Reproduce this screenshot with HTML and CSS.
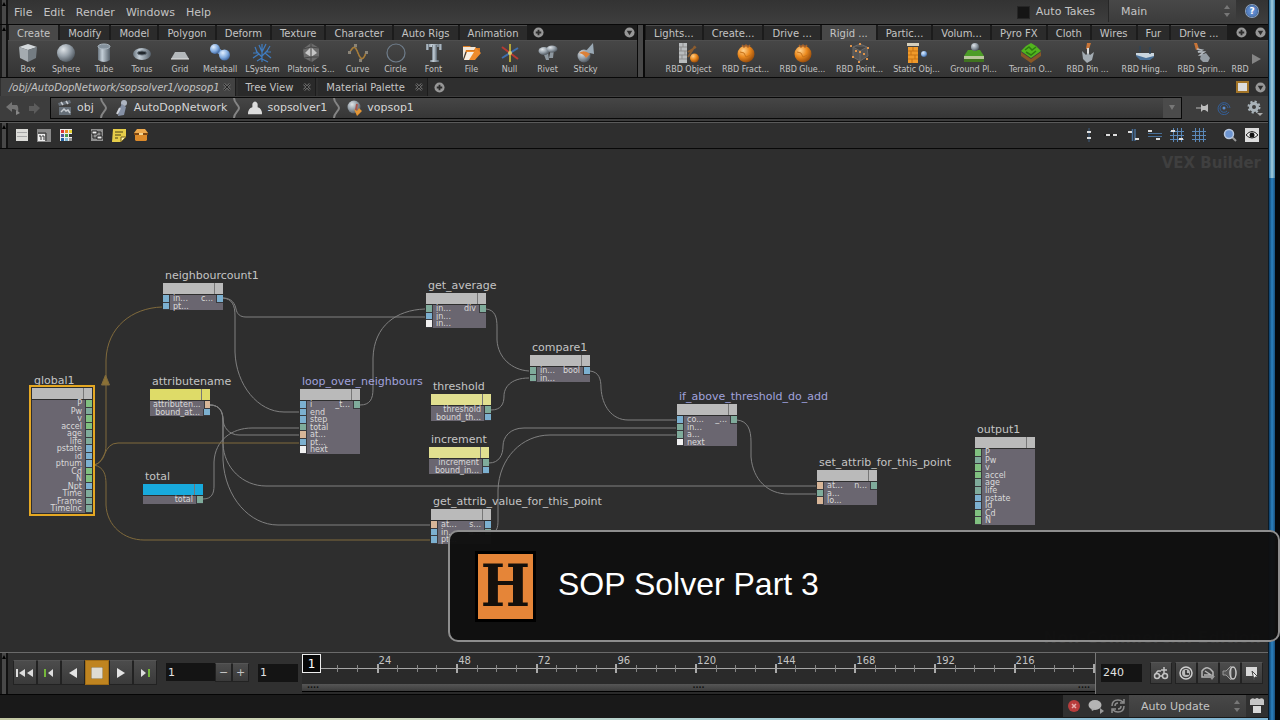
FILE: index.html
```html
<!DOCTYPE html>
<html lang="en">
<head>
    <meta charset="UTF-8">
    <meta name="viewport" content="width=device-width, initial-scale=1.0">
    <title>SOP Solver Part 3</title>
    <link rel="stylesheet" href="styles.css">
</head>
<body>
    <svg class="defs" width="0" height="0" aria-hidden="true">
        <defs>
            <radialGradient id="gBall" cx="35%" cy="30%" r="75%"><stop offset="0" stop-color="#dfe4e8"/><stop offset="0.5" stop-color="#98a2ab"/><stop offset="1" stop-color="#4c545c"/></radialGradient>
            <radialGradient id="gBlue" cx="35%" cy="30%" r="75%"><stop offset="0" stop-color="#e2efff"/><stop offset="0.6" stop-color="#7fa9de"/><stop offset="1" stop-color="#3d629a"/></radialGradient>
            <radialGradient id="gOrange" cx="35%" cy="30%" r="75%"><stop offset="0" stop-color="#ffd08a"/><stop offset="0.5" stop-color="#ec8a1e"/><stop offset="1" stop-color="#92480a"/></radialGradient>
            <linearGradient id="gTube"><stop offset="0" stop-color="#69747e"/><stop offset="0.35" stop-color="#c4cfd8"/><stop offset="1" stop-color="#56616b"/></linearGradient>
        </defs>
        <symbol id="box" viewBox="0 0 20 20"><path d="M1 4 10 1 19 4 10 7z" fill="#d3d8db"/><path d="M1 4 10 7 10 19 2 15z" fill="#a4abb0"/><path d="M19 4 10 7 10 19 18 15z" fill="#747c82"/></symbol>
        <symbol id="sphere" viewBox="0 0 20 20"><circle cx="10" cy="10" r="9" fill="url(#gBall)"/></symbol>
        <symbol id="tube" viewBox="0 0 20 20"><path d="M4 3v14q6 4 12 0V3z" fill="url(#gTube)"/><ellipse cx="10" cy="3.500" rx="6" ry="2.500" fill="#84919c" stroke="#aab6c0"/></symbol>
        <symbol id="torus" viewBox="0 0 20 20"><ellipse cx="10" cy="11" rx="9" ry="6" fill="url(#gTube)"/><ellipse cx="10" cy="10" rx="4.500" ry="2" fill="#22282d" stroke="#66717a"/></symbol>
        <symbol id="grid" viewBox="0 0 20 20"><path d="M5 9h10l4 7H1z" fill="#b4b8bb"/><path d="M1 16h18" stroke="#e0e0e0"/></symbol>
        <symbol id="metaball" viewBox="0 0 20 20"><path d="M6 6 14 12" stroke="#6f9bd2" stroke-width="5"/><circle cx="5" cy="6" r="5" fill="url(#gBlue)"/><circle cx="14.500" cy="12" r="5.500" fill="url(#gBlue)"/></symbol>
        <symbol id="lsystem" viewBox="0 0 20 20"><path d="M10 19V9M10 14 4 8M10 13l6-6M10 9 7 2M10 9l4-8M6 10H1M7 11l-6 4M14 9h5M13 10l6 5M5 9 3 4M15 8l3-5M10 15l-5 3M10 16l6 3M10 10 10 1" fill="none" stroke="#3f7cc0" stroke-width="1.200"/></symbol>
        <symbol id="platonic" viewBox="0 0 20 20"><path d="M10 0 18 5 18 14 11 19 3 15 2 6z" fill="#6b6b6b"/><path d="M10 4 16 10 10 14 4 10z" fill="#c5c5c5"/><path d="M10 0v19M2 6l8-2 8 1M3 15l7-1 8 0" stroke="#454545" fill="none"/></symbol>
        <symbol id="curve" viewBox="0 0 20 20"><path d="M1 10 7 2 13 18 19 10" stroke="#776" fill="none" stroke-dasharray="2 1"/><path d="M2 9C6 1 8 5 10 10s5 10 8-1" fill="none" stroke="#a87c37" stroke-width="1.500"/><path d="M0 8h3v3H0zM6 1h3v3H6zM11 16h3v3h-3zM17 8h3v3h-3z" fill="#8a8478"/></symbol>
        <symbol id="circle" viewBox="0 0 20 20"><circle cx="10" cy="10" r="9" fill="none" stroke="#6f7d8b" stroke-width="1.200"/></symbol>
        <symbol id="font" viewBox="0 0 20 20"><g fill="url(#gTube)"><rect x="2" y="1" width="16" height="3"/><rect x="2" y="1" width="3" height="6"/><rect x="15" y="1" width="3" height="6"/><rect x="8" y="2" width="5" height="17"/><rect x="6" y="17" width="9" height="2"/></g></symbol>
        <symbol id="file" viewBox="0 0 20 20"><path d="M1 3h7l2 2h8v4H1z" fill="#d8781f"/><path d="M1 4h13l-2 3H4L1 16z" fill="#f0e6d8"/><path d="M2 17 5 8h8v-4l6 6-6 7z" fill="#ee8b2c"/><path d="M2 17 5 9h7l-5 8z" fill="#f7efe4"/></symbol>
        <symbol id="null" viewBox="0 0 20 20"><path d="M10 1v18" stroke="#b4a436" stroke-width="2"/><path d="M2 4l16 12" stroke="#b83a32" stroke-width="2"/><path d="M18 5 2 15" stroke="#3f6fae" stroke-width="2"/><circle cx="10" cy="10" r="2" fill="#d8cc74"/></symbol>
        <symbol id="rivet" viewBox="0 0 20 20"><path d="M5 9l3 8h3L10 9zM13 6l-2 9h4l1-9z" fill="#8d979f"/><ellipse cx="6" cy="8" rx="5.500" ry="4" fill="url(#gBall)"/><ellipse cx="14" cy="6" rx="5.500" ry="3.500" fill="url(#gBall)"/></symbol>
        <symbol id="sticky" viewBox="0 0 20 20"><circle cx="8" cy="13" r="6.500" fill="url(#gBall)"/><path d="M17 0 18 11 9 9z" fill="#9aa9b5"/><path d="M3 10q5-4 11 1l-4 4q-2-4-7-5z" fill="#dc8139"/></symbol>
        <symbol id="rbdobj" viewBox="0 0 20 20"><path d="M0 0h8v20H0z" fill="#b9bcbe"/><path d="M0 4h8M0 8h8M0 12h8M0 16h8M4 0v4M2 4v4M6 8v4M3 12v4" stroke="#8d8d8d"/><path d="M9 14 16 3M9 9l8-5" stroke="#8c5c2e" stroke-width="2"/><circle cx="15.500" cy="15" r="4.500" fill="url(#gOrange)"/></symbol>
        <symbol id="orange" viewBox="0 0 20 20"><circle cx="10" cy="11" r="8.500" fill="url(#gOrange)"/><path d="M6 2l2 2 2-2 2 2 2-2" stroke="#a4602a" fill="none" stroke-width="1.500"/><path d="M4 9l4 1 2 4 5-2" stroke="#c9741a" fill="none"/></symbol>
        <symbol id="points" viewBox="0 0 20 20"><path d="M3 4 10 1 17 4 18 13 10 18 3 14zM3 4l7 4 7-4M10 8v10" fill="#555" stroke="#686868"/><path d="M0 2h2v2H0zM9 0h2v2H9zM17 4h2v2h-2zM9 8h2v2H9zM2 13h2v2H2zM16 15h2v2h-2zM8 18h2v2H8zM5 7h2v2H5zM13 10h2v2h-2z" fill="#e0944a"/></symbol>
        <symbol id="static" viewBox="0 0 20 20"><path d="M0 0h12v3H0z" fill="#d5cfbd"/><path d="M1 4h10v16H1z" fill="#f09a2a"/><path d="M1 8h10M1 12h10M1 16h10M6 4v4M4 8v4M8 12v4M5 16v4" stroke="#c87212"/><circle cx="17" cy="11" r="3" fill="url(#gBlue)"/></symbol>
        <symbol id="ground" viewBox="0 0 20 20"><path d="M4 7h12l4 6H0z" fill="#4c9c27"/><path d="M0 13h20v3H0z" fill="#b9c69c"/><path d="M0 16h20v3H0z" fill="#3f7220"/><circle cx="11" cy="4" r="4" fill="url(#gBall)"/></symbol>
        <symbol id="terrain" viewBox="0 0 20 20"><path d="M0 9 10 16 20 9v4L10 20 0 13z" fill="#875726"/><path d="M0 8 5 3l5-3 5 3 5 5-10 7z" fill="#52b51e"/><path d="M4 7l4-3 3 3 4-3M5 9l5 3 5-4" stroke="#2d7a12" fill="none" stroke-width="1.500"/></symbol>
        <symbol id="pin" viewBox="0 0 20 20"><path d="M9 0h4l-2 6H8z" fill="#c87437"/><path d="M10 5v6" stroke="#ddd" stroke-width="2"/><path d="M4 8l4 4 2-2 2 2 4-3-2 8-5 3-4-4z" fill="#a2abb2"/></symbol>
        <symbol id="hinge" viewBox="0 0 20 20"><path d="M1 10h18v4l-4 3H5l-4-4z" fill="#4a7199"/><path d="M1 10h18v3l-8 2-10-3z" fill="#c9d5de"/><path d="M5 3v6M15 4v7" stroke="#30455a" stroke-width="1.500"/></symbol>
        <symbol id="spring" viewBox="0 0 20 20"><path d="M2 0h3l2 6-3 1z" fill="#c87437"/><path d="M5 6l5 1-4 2 6 0-4 3 5 0" stroke="#b4bac0" fill="none" stroke-width="1.500"/><path d="M9 12l5-2 4 5-2 4-5 0-3-3z" fill="#959da4"/></symbol>
        <symbol id="plus" viewBox="0 0 12 12"><circle cx="6" cy="6" r="5.500" fill="#989898"/><path d="M6 3v6M3 6h6" stroke="#2c2c2c" stroke-width="2"/></symbol>
        <symbol id="down" viewBox="0 0 12 12"><circle cx="6" cy="6" r="5.500" fill="#989898"/><path d="M3 4h6L6 9z" fill="#2c2c2c"/></symbol>
        <symbol id="close" viewBox="0 0 8 8"><path d="M1 1l6 6M7 1 1 7" stroke="#686868" stroke-width="2.500"/><path d="M1 1l6 6M7 1 1 7" stroke="#252525"/></symbol>
        <symbol id="chevron" viewBox="0 0 8 20"><path d="M1 0C1 5 6 7 6 10S1 15 1 20" fill="none" stroke="#858585" stroke-width="2"/></symbol>
        <symbol id="back" viewBox="0 0 14 14"><path d="M0 6l6-5v3h5q2 2 1 8-1-4-6-4v3z" fill="#747474"/><path d="M10 9l4 3-4 2z" fill="#888"/></symbol>
        <symbol id="forward" viewBox="0 0 14 14"><path d="M13 7 7 2v3H2v5h5v3z" fill="#5c5c5c"/></symbol>
        <symbol id="scene" viewBox="0 0 16 16"><path d="M1 3l12-3 1 3-12 3zM2 7h12v8H2z" fill="#666f78"/><path d="M4 2l2 3M9 1l2 3M4 12l3-3 2 2 2-1 2 3" stroke="#c6cbd0" stroke-width="1.500" fill="none"/></symbol>
        <symbol id="dop" viewBox="0 0 16 16"><circle cx="10" cy="3" r="3" fill="#aeb5c2"/><path d="M8 4l4 3-2 8-6 1 1-7z" fill="#8590a5"/><path d="M6 8l-3 6" stroke="#ced2da" stroke-width="2"/></symbol>
        <symbol id="sop" viewBox="0 0 16 16"><path d="M5 3q3-5 6 0v4q5 1 5 8H0q0-7 5-8z" fill="#dcdcdc"/></symbol>
        <symbol id="vop" viewBox="0 0 16 16"><circle cx="7" cy="7" r="6.500" fill="url(#gBall)"/><path d="M7 9l3 2 2-3 3 3-5 5z" fill="#e39535"/><path d="M10 4l-1 6" stroke="#a8534a" stroke-width="2"/></symbol>
        <symbol id="pushpin" viewBox="0 0 16 12"><path d="M2 6h5" stroke="#bbb"/><path d="M7 2l2 2h2l3-2v8l-3-2H9l-2 2z" fill="#bdbdbd"/></symbol>
        <symbol id="target" viewBox="0 0 14 14"><path d="M12 11A6 6 0 1 1 13 7M10 10A4 4 0 1 1 11 7" fill="none" stroke="#345f98"/><circle cx="7" cy="7" r="1.500" fill="#5c8dcd"/></symbol>
        <symbol id="gear" viewBox="0 0 16 16"><circle cx="7" cy="7" r="3.500" fill="none" stroke="#a9b3b9" stroke-width="3"/><circle cx="7" cy="7" r="5.500" fill="none" stroke="#a9b3b9" stroke-width="2" stroke-dasharray="2.200 2.100"/><path d="M10 13h6l-3 3z" fill="#aaa"/></symbol>
        <symbol id="list" viewBox="0 0 14 14"><path d="M1 1h12v12H1z" fill="#dcdcd8"/><path d="M2 4.500h10M2 8.500h10" stroke="#a5a5a5"/></symbol>
        <symbol id="layers" viewBox="0 0 14 14"><path d="M0 1h14v13H0z" fill="#898989"/><path d="M1 6h7v7H1z" fill="#eee"/><path d="M2 8h2v4M5 8h2v4" stroke="#333" fill="none"/><path d="M9 5v8M1 5h8" stroke="#333"/></symbol>
        <symbol id="palette" viewBox="0 0 14 14"><path d="M1 1h12v12H1z" fill="#eee"/><path d="M2 2h3v3H2z" fill="#d33"/><path d="M6 2h3v3H6z" fill="#e98a1f"/><path d="M10 2h3v3h-3z" fill="#e6d233"/><path d="M2 6h3v3H2z" fill="#53549b"/><path d="M6 6h3v3H6z" fill="#4b9b47"/><path d="M10 6h3v3h-3z" fill="#333"/><path d="M2 10h3v3H2z" fill="#25609f"/><path d="M6 10h3v3H6z" fill="#80b8d3"/><path d="M10 10h3v3h-3z" fill="#999"/></symbol>
        <symbol id="flow" viewBox="0 0 14 14"><path d="M1 1h12v12H1z" fill="#8f8f8f"/><path d="M2 3h5v3H2zM7 8h5v3H7z" fill="#eee" stroke="#222"/><path d="M7 4h4v4M3 6v4h4" stroke="#222" fill="none"/></symbol>
        <symbol id="note" viewBox="0 0 14 14"><path d="M1 1h13v8l-5 5H0z" fill="#e6cd49"/><path d="M3 4h8M3 7h6M3 10h3" stroke="#4b4219"/><path d="M9 14V9h5z" fill="#fff1a0" stroke="#715f20"/></symbol>
        <symbol id="chest" viewBox="0 0 14 14"><path d="M3 1h8l3 4H0z" fill="#eda94d"/><path d="M0 5h14v2H0z" fill="#7d4713"/><path d="M1 7h12v5l-1 1H2l-1-1z" fill="#dc8a2a"/><path d="M5 5h4v2H5z" fill="#f2d594"/></symbol>
        <symbol id="alignv" viewBox="0 0 14 14"><path d="M7 0v14" stroke="#3d5f83"/><path d="M5 3h4v2H5zM5 9h4v2H5z" fill="#ddd"/></symbol>
        <symbol id="alignh" viewBox="0 0 14 14"><path d="M0 7h14" stroke="#111"/><path d="M2 6h4v2H2zM9 6h4v2H9z" fill="#ddd"/></symbol>
        <symbol id="snapv" viewBox="0 0 14 14"><path d="M6.500 1v12M9 1v12" stroke="#486f98" stroke-width="1.500"/><path d="M2 3h4v2H2zM9 10h4v2H9z" fill="#ddd"/></symbol>
        <symbol id="snaph" viewBox="0 0 14 14"><path d="M0 5.500h14M0 8.500h14" stroke="#486f98"/><path d="M0 2h4v2H0zM8 10h4v2H8z" fill="#ddd"/></symbol>
        <symbol id="snapgrid" viewBox="0 0 14 14"><path d="M3.500 0v14M7.500 0v14M11.500 0v14M0 3.500h14M0 7.500h14M0 11.500h14" stroke="#5a88b8"/><path d="M1 2h4v2H1zM9 10h4v2H9z" fill="#ddd"/></symbol>
        <symbol id="showgrid" viewBox="0 0 14 14"><path d="M3.500 0v14M7.500 0v14M11.500 0v14M0 3.500h14M0 7.500h14M0 11.500h14" stroke="#5a88b8"/></symbol>
        <symbol id="search" viewBox="0 0 14 14"><path d="M8 8l5 5" stroke="#999" stroke-width="2"/><circle cx="6" cy="6" r="4.500" fill="#6d95d1" stroke="#b9c8de" stroke-width="1.500"/></symbol>
        <symbol id="eye" viewBox="0 0 14 14"><path d="M0 0h14v14H0z" fill="#ddd"/><path d="M1 7q6-7 12 0-6 6-12 0z" fill="#f5f5f5" stroke="#222"/><circle cx="7" cy="7" r="2.500" fill="#111"/></symbol>
        <symbol id="first" viewBox="0 0 18 10"><path d="M1 1v8" stroke="#ddd" stroke-width="2"/><path d="M9 1v8L3 5zM17 1v8l-6-4z" fill="#ddd"/></symbol>
        <symbol id="prevkey" viewBox="0 0 18 10"><path d="M5 1v8" stroke="#75b83a" stroke-width="2"/><path d="M13 1v8L8 5z" fill="#ddd"/></symbol>
        <symbol id="reverse" viewBox="0 0 18 10"><path d="M13 0v10L5 5z" fill="#e4e4e4"/></symbol>
        <symbol id="stop" viewBox="0 0 12 12"><path d="M0 0h12v12H0z" fill="#dedbd2" stroke="#8a6a2a"/></symbol>
        <symbol id="play" viewBox="0 0 18 10"><path d="M5 0v10l8-5z" fill="#e4e4e4"/></symbol>
        <symbol id="nextkey" viewBox="0 0 18 10"><path d="M13 1v8" stroke="#75b83a" stroke-width="2"/><path d="M5 1v8l5-4z" fill="#ddd"/></symbol>
        <symbol id="key" viewBox="0 0 16 16"><circle cx="4" cy="11" r="2.500" fill="none" stroke="#c3c3c3" stroke-width="1.500"/><circle cx="12" cy="11" r="2.500" fill="none" stroke="#c3c3c3" stroke-width="1.500"/><path d="M3 8l2-2h3M7 11h2M11 2v6M8 5h6" stroke="#c3c3c3" stroke-width="1.500" fill="none"/></symbol>
        <symbol id="clock" viewBox="0 0 16 16"><circle cx="8" cy="8" r="6" fill="none" stroke="#cfcfcf" stroke-width="1.500"/><circle cx="8" cy="8" r="4" fill="#bbb"/><path d="M8 5v4h3" stroke="#222" stroke-width="1.500" fill="none"/></symbol>
        <symbol id="gauge" viewBox="0 0 16 16"><path d="M2 12V6q5-7 11 1v5zM4 10h7L5 6" fill="none" stroke="#b5b5b5" stroke-width="1.500"/><path d="M9 11h6l-3 4z" fill="#999"/></symbol>
        <symbol id="sound" viewBox="0 0 16 16"><path d="M1 6h3l5-5v14l-5-5H1z" fill="#555" stroke="#999"/><ellipse cx="11" cy="8" rx="3" ry="6" fill="none" stroke="#c8c8c8" stroke-width="1.500"/></symbol>
        <symbol id="prefs" viewBox="0 0 16 16"><path d="M2 2h11v9H2z" fill="#d8d8d8"/><path d="M8 6l6 6-3 0-1 3z" fill="#eee" stroke="#444"/></symbol>
        <symbol id="error" viewBox="0 0 14 14"><circle cx="7" cy="7" r="6" fill="#b83d3d"/><path d="M5 5l4 4M9 5l-4 4" stroke="#e8b0b0" stroke-width="1.500"/></symbol>
        <symbol id="bubble" viewBox="0 0 16 16"><ellipse cx="7" cy="7" rx="6.500" ry="5" fill="#b4b4b4"/><path d="M3 10l1 3 4-2z" fill="#a9a9a9"/><path d="M12 10l4 3-4 3z" fill="#999"/></symbol>
        <symbol id="refresh" viewBox="0 0 16 16"><path d="M2 8q0-6 6-6 3 0 5 2M14 8q0 6-6 6-3 0-5-2M14 1v4h-4M2 15v-4h4M5 8q0-3 3-3M11 8q0 3-3 3" fill="none" stroke="#8d8d8d" stroke-width="1.500"/></symbol>
        <symbol id="chef" viewBox="0 0 14 16"><path d="M0 2q2-3 5-1 2-2 4 0 4-2 5 1v5H0z" fill="#c5c5c5"/><path d="M3 8h8v7H3z" fill="#d8d8d8"/></symbol>
        <symbol id="spin" viewBox="0 0 8 14"><path d="M4 1l3 4H1zM4 13l3-4H1z" fill="#777"/></symbol>
    </svg>

    <div class="window">
        <main class="app">
            <header class="menubar">
                <span class="grip"></span>
                <nav class="menus">
                    <button>File</button>
                    <button>Edit</button>
                    <button>Render</button>
                    <button>Windows</button>
                    <button>Help</button>
                </nav>
                <label class="takes"><input type="checkbox"> Auto Takes</label>
                <span class="picker take-picker">
                    <select aria-label="Take"><option>Main</option></select>
                    <svg width="8" height="14"><use href="#spin"/></svg>
                </span>
                <button class="help" aria-label="Help">?</button>
            </header>

            <section class="shelves">
                <span class="grip"></span>
                <div class="shelf shelf-left">
                    <div class="tabs">
                        <button class="tab active">Create</button>
                        <button class="tab">Modify</button>
                        <button class="tab">Model</button>
                        <button class="tab">Polygon</button>
                        <button class="tab">Deform</button>
                        <button class="tab">Texture</button>
                        <button class="tab">Character</button>
                        <button class="tab">Auto Rigs</button>
                        <button class="tab">Animation</button>
                        <button class="round" aria-label="Add shelf"><svg width="11" height="11"><use href="#plus"/></svg></button>
                        <button class="round push" aria-label="Shelf menu"><svg width="11" height="11"><use href="#down"/></svg></button>
                    </div>
                    <div class="tools">
                        <button><svg><use href="#box"/></svg>Box</button>
                        <button><svg><use href="#sphere"/></svg>Sphere</button>
                        <button><svg><use href="#tube"/></svg>Tube</button>
                        <button><svg><use href="#torus"/></svg>Torus</button>
                        <button><svg><use href="#grid"/></svg>Grid</button>
                        <button><svg><use href="#metaball"/></svg>Metaball</button>
                        <button><svg><use href="#lsystem"/></svg>LSystem</button>
                        <button><svg><use href="#platonic"/></svg>Platonic S...</button>
                        <button><svg><use href="#curve"/></svg>Curve</button>
                        <button><svg><use href="#circle"/></svg>Circle</button>
                        <button><svg><use href="#font"/></svg>Font</button>
                        <button><svg><use href="#file"/></svg>File</button>
                        <button><svg><use href="#null"/></svg>Null</button>
                        <button><svg><use href="#rivet"/></svg>Rivet</button>
                        <button><svg><use href="#sticky"/></svg>Sticky</button>
                    </div>
                </div>
                <span class="splitter"></span>
                <div class="shelf shelf-right">
                    <div class="tabs">
                        <button class="tab">Lights...</button>
                        <button class="tab">Create...</button>
                        <button class="tab">Drive ...</button>
                        <button class="tab active">Rigid ...</button>
                        <button class="tab">Partic...</button>
                        <button class="tab">Volum...</button>
                        <button class="tab">Pyro FX</button>
                        <button class="tab">Cloth</button>
                        <button class="tab">Wires</button>
                        <button class="tab">Fur</button>
                        <button class="tab">Drive ...</button>
                        <button class="round push" aria-label="Add shelf"><svg width="11" height="11"><use href="#plus"/></svg></button>
                        <button class="round" aria-label="Shelf menu"><svg width="11" height="11"><use href="#down"/></svg></button>
                    </div>
                    <div class="tools wide">
                        <button><svg><use href="#rbdobj"/></svg>RBD Object</button>
                        <button><svg><use href="#orange"/></svg>RBD Fract...</button>
                        <button><svg><use href="#orange"/></svg>RBD Glue...</button>
                        <button><svg><use href="#points"/></svg>RBD Point...</button>
                        <button><svg><use href="#static"/></svg>Static Obj...</button>
                        <button><svg><use href="#ground"/></svg>Ground Pl...</button>
                        <button><svg><use href="#terrain"/></svg>Terrain O...</button>
                        <button><svg><use href="#pin"/></svg>RBD Pin ...</button>
                        <button><svg><use href="#hinge"/></svg>RBD Hing...</button>
                        <button><svg><use href="#spring"/></svg>RBD Sprin...</button>
                        <button class="cut">RBD</button>
                        <span class="more"></span>
                    </div>
                </div>
            </section>

            <div class="pane-tabs">
                <button class="pane-tab active">/obj/AutoDopNetwork/sopsolver1/vopsop1 <svg width="8" height="8"><use href="#close"/></svg></button>
                <button class="pane-tab">Tree View <svg width="8" height="8"><use href="#close"/></svg></button>
                <button class="pane-tab">Material Palette <svg width="8" height="8"><use href="#close"/></svg></button>
                <button class="round" aria-label="Add pane tab"><svg width="11" height="11"><use href="#plus"/></svg></button>
                <button class="maximize push" aria-label="Maximize pane"></button>
                <button class="round" aria-label="Pane menu"><svg width="11" height="11"><use href="#down"/></svg></button>
            </div>

            <div class="pathbar">
                <button aria-label="Back"><svg width="14" height="14"><use href="#back"/></svg></button>
                <button aria-label="Forward"><svg width="14" height="14"><use href="#forward"/></svg></button>
                <nav class="path">
                    <a href="#obj"><svg width="16" height="16"><use href="#scene"/></svg>obj</a>
                    <svg width="8" height="20"><use href="#chevron"/></svg>
                    <a href="#dop"><svg width="16" height="16"><use href="#dop"/></svg>AutoDopNetwork</a>
                    <svg width="8" height="20"><use href="#chevron"/></svg>
                    <a href="#sop"><svg width="16" height="14"><use href="#sop"/></svg>sopsolver1</a>
                    <svg width="8" height="20"><use href="#chevron"/></svg>
                    <a href="#vop"><svg width="16" height="16"><use href="#vop"/></svg>vopsop1</a>
                    <button class="path-drop" aria-label="Path history"></button>
                </nav>
                <button aria-label="Pin"><svg width="16" height="12"><use href="#pushpin"/></svg></button>
                <button aria-label="Follow selection"><svg width="14" height="14"><use href="#target"/></svg></button>
                <button class="options" aria-label="Options"><svg width="16" height="16"><use href="#gear"/></svg></button>
            </div>

            <div class="toolbar">
                <span class="grip"></span>
                <div class="tool-group">
                    <button aria-label="List"><svg><use href="#list"/></svg></button>
                    <button aria-label="Layers"><svg><use href="#layers"/></svg></button>
                    <button aria-label="Colors"><svg><use href="#palette"/></svg></button>
                </div>
                <div class="tool-group">
                    <button aria-label="Subnet"><svg><use href="#flow"/></svg></button>
                    <button aria-label="Sticky note"><svg><use href="#note"/></svg></button>
                    <button aria-label="Network box"><svg><use href="#chest"/></svg></button>
                </div>
                <div class="tool-group push">
                    <button aria-label="Align vertically"><svg><use href="#alignv"/></svg></button>
                    <button aria-label="Align horizontally"><svg><use href="#alignh"/></svg></button>
                    <button aria-label="Snap vertically"><svg><use href="#snapv"/></svg></button>
                    <button aria-label="Snap horizontally"><svg><use href="#snaph"/></svg></button>
                    <button aria-label="Snap to grid"><svg><use href="#snapgrid"/></svg></button>
                    <button aria-label="Show grid"><svg><use href="#showgrid"/></svg></button>
                </div>
                <div class="tool-group last">
                    <button aria-label="Find"><svg><use href="#search"/></svg></button>
                    <button aria-label="Display options"><svg><use href="#eye"/></svg></button>
                </div>
            </div>

            <section class="network" id="network">
                <svg class="wires" width="1268" height="503" viewBox="0 149 1268 503">
                    <g class="wire">
                        <path d="M223 298C232 298 235 304 236 309S240 317 246 317H425"/>
                        <path d="M223 298C232 299 235 305 235 316V352C236 385 258 412 284 412H299"/>
                        <path d="M210 405C219 405 223 411 223 419S229 435 239 435H299"/>
                        <path d="M210 405C219 405 223 411 223 421V444C224 468 243 486 266 486H816"/>
                        <path d="M210 405C219 405 223 411 223 421V460C225 498 250 525 278 525H430"/>
                        <path d="M203 499C212 499 214 493 214 486V462C215 440 232 428 252 428H299"/>
                        <path d="M360 405C370 405 373 399 373 389V358C374 326 396 310 425 309"/>
                        <path d="M486 309C495 310 497 317 497 327V340C498 358 512 370 529 371"/>
                        <path d="M491 410C501 410 504 404 504 396S510 378 529 378"/>
                        <path d="M489 463C499 463 503 455 503 446S510 428 524 428H676"/>
                        <path d="M491 532C497 532 498 528 498 520V490C499 458 522 435 550 435H676"/>
                        <path d="M590 371C599 372 601 379 601 388C602 406 612 420 628 420H676"/>
                        <path d="M737 420C748 421 751 430 751 442V457C753 480 768 494 788 494H816"/>
                    </g>
                    <g class="wire gold">
                        <path d="M94 465C102 463 106 455 106 445V360C107 327 132 308 162 307"/>
                        <path d="M94 465C106 463 103 443 118 443H299"/>
                        <path d="M94 465C104 467 106 475 106 484V505C107 526 124 540 144 540H430"/>
                        <path class="arrow" d="M105.500 375l4 10h-8z"/>
                    </g>
                </svg>
                <span class="watermark">VEX Builder</span>
                <span class="watermark edition">Non-Commercial Edition</span>
            </section>

            <footer class="playbar">
                <span class="grip"></span>
                <div class="transport">
                    <button aria-label="First frame"><svg width="18" height="10"><use href="#first"/></svg></button>
                    <button aria-label="Previous key"><svg width="18" height="10"><use href="#prevkey"/></svg></button>
                    <button aria-label="Play backwards"><svg width="18" height="10"><use href="#reverse"/></svg></button>
                    <button class="on" aria-label="Stop"><svg width="12" height="12"><use href="#stop"/></svg></button>
                    <button aria-label="Play"><svg width="18" height="10"><use href="#play"/></svg></button>
                    <button aria-label="Next key"><svg width="18" height="10"><use href="#nextkey"/></svg></button>
                </div>
                <div class="frame-box">
                    <input class="frame" value="1" aria-label="Current frame">
                    <button aria-label="Back one frame">−</button>
                    <button aria-label="Forward one frame">+</button>
                </div>
                <input class="frame start" value="1" aria-label="Start frame">
                <div class="timeline">
                    <div class="ticks" id="ticks"><span class="playhead">1</span></div>
                    <div class="range"><span>....</span><span>....</span><span>....</span></div>
                </div>
                <input class="frame end" value="240" aria-label="End frame">
                <div class="play-options">
                    <button class="apart" aria-label="Set key"><svg width="16" height="16"><use href="#key"/></svg></button>
                    <button aria-label="Real time"><svg width="16" height="16"><use href="#clock"/></svg></button>
                    <button aria-label="Playback mode"><svg width="16" height="16"><use href="#gauge"/></svg></button>
                    <button aria-label="Audio"><svg width="16" height="16"><use href="#sound"/></svg></button>
                    <button aria-label="Animation options"><svg width="16" height="16"><use href="#prefs"/></svg></button>
                </div>
            </footer>

            <div class="status">
                <button aria-label="Errors"><svg width="14" height="14"><use href="#error"/></svg></button>
                <button aria-label="Messages"><svg width="16" height="16"><use href="#bubble"/></svg></button>
                <button aria-label="Recook"><svg width="16" height="16"><use href="#refresh"/></svg></button>
                <span class="picker update-picker">
                    <select aria-label="Update mode"><option>Auto Update</option></select>
                    <svg width="8" height="14"><use href="#spin"/></svg>
                </span>
                <button aria-label="Cooking"><svg width="14" height="16"><use href="#chef"/></svg></button>
            </div>
        </main>
        <aside class="edge"></aside>
        <div class="title-card">
            <span class="logo">H</span>
            <h1>SOP Solver Part 3</h1>
        </div>
    </div>

    <script>
        // x and y are the top left corner of a node's name on the canvas
        // ports: [name, type] with g = vector, t = float, b = int, p = string, w = any
        const nodes = [
            { name: "neighbourcount1", x: 163, y: 119, ins: [["in...", "b"], ["pt...", "b"]], outs: [["c...", "b"]] },
            { name: "global1", x: 32, y: 224, cls: "selected", ins: [], outs: [["P", "g"], ["Pw", "t"], ["v", "g"], ["accel", "g"], ["age", "t"], ["life", "t"], ["pstate", "b"], ["id", "b"], ["ptnum", "b"], ["Cd", "g"], ["N", "g"], ["Npt", "b"], ["Time", "t"], ["Frame", "t"], ["TimeInc", "t"]] },
            { name: "attributename", x: 150, y: 225, cls: "yellow", ins: [], outs: [["attributen...", "p"], ["bound_at...", "b"]] },
            { name: "total", x: 143, y: 320, cls: "cyan", ins: [], outs: [["total", "t"]] },
            { name: "loop_over_neighbours", x: 300, y: 225, cls: "subnet", ins: [["i", "b"], ["end", "b"], ["step", "b"], ["total", "t"], ["at...", "p"], ["pt...", "b"], ["next", "w"]], outs: [["_t...", "t"]] },
            { name: "get_average", x: 426, y: 129, ins: [["in...", "t"], ["in...", "b"], ["in...", "w"]], outs: [["div", "t"]] },
            { name: "threshold", x: 431, y: 230, cls: "pale", ins: [], outs: [["threshold", "t"], ["bound_th...", "b"]] },
            { name: "increment", x: 429, y: 283, cls: "pale", ins: [], outs: [["increment", "t"], ["bound_in...", "b"]] },
            { name: "get_attrib_value_for_this_point", x: 431, y: 345, ins: [["at...", "p"], ["in...", "b"], ["pt...", "b"]], outs: [["s...", "b"], ["a...", "t"]] },
            { name: "compare1", x: 530, y: 191, ins: [["in...", "t"], ["in...", "t"]], outs: [["bool", "b"]] },
            { name: "if_above_threshold_do_add", x: 677, y: 240, cls: "subnet", ins: [["co...", "b"], ["in...", "t"], ["a...", "t"], ["next", "w"]], outs: [["_...", "t"]] },
            { name: "set_attrib_for_this_point", x: 817, y: 306, ins: [["at...", "p"], ["a...", "t"], ["lo...", "p"]], outs: [["n...", "t"]] },
            { name: "output1", x: 975, y: 273, ins: [["P", "g"], ["Pw", "t"], ["v", "g"], ["accel", "g"], ["age", "t"], ["life", "t"], ["pstate", "b"], ["id", "b"], ["Cd", "g"], ["N", "g"]], outs: [] }
        ];

        const network = document.getElementById("network");
        for (let node of nodes) {
            let rows = Math.max(node.ins.length, node.outs.length);
            let body = "";
            for (let i = 0; i < rows; i++) {
                let a = node.ins[i];
                let b = node.outs[i];
                body += '<div class="row">';
                if (a) body += `<i class="port ${a[1]}"></i><span>${a[0]}</span>`;
                if (b) body += `<span class="out">${b[0]}</span><i class="port ${b[1]}"></i>`;
                body += "</div>";
            }
            let el = document.createElement("div");
            el.className = "node " + (node.cls || "");
            el.style.left = node.x + "px";
            el.style.top = node.y + "px";
            el.innerHTML = `<div class="name">${node.name}</div>
                <div class="block"><div class="head"></div>
                <div class="body" style="height:${Math.round(rows * 7.55)}px">${body}</div></div>`;
            network.appendChild(el);
        }

        // one tick every 6 frames, a number on every 24th
        const ticks = document.getElementById("ticks");
        for (let f = 6; f <= 240; f += 6) {
            let tick = document.createElement("span");
            tick.className = "tick" + (f % 24 === 0 ? " major" : "") + (f === 6 ? " first" : "");
            if (f % 24 === 0 && f < 240) tick.innerHTML = `<b>${f}</b>`;
            ticks.appendChild(tick);
        }
    </script>
</body>
</html>
```

FILE: styles.css
```css
* {
    box-sizing: border-box;
}
body {
    margin: 0;
    background-color: #05080b;
    color: #c4c4c4;
    font-family: "DejaVu Sans", sans-serif;
    font-size: 11px;
    overflow: hidden;
}
button, input, select {
    font: inherit;
    color: inherit;
    margin: 0;
    padding: 0;
    border: none;
    background: none;
    border-radius: 0;
}
button {
    display: flex;
    align-items: center;
    justify-content: center;
    flex: none;
    white-space: nowrap;
}
svg {
    display: block;
    flex: none;
}
.defs {
    position: absolute;
}
.push {
    margin-left: auto;
}
.window {
    position: relative;
    display: flex;
    height: 100vh;
}
.app {
    flex: 1;
    min-width: 0;
    display: flex;
    flex-direction: column;
    background-color: #2e2e2e;
}
.app::after {
    content: "";
    height: 2px;
    background: linear-gradient(to right, #c3c8a4, #d3dcc0 30%, #a9cfd6 60%, #7fb4d2);
}
.edge {
    width: 12px;
    border-left: 1px solid #0b1a26;
    background:
        linear-gradient(to right, #2a6f9e, #a3cfe0 3px, #3a7ba6 6px, #05080b 6px) 0 0 / 100% 178px no-repeat,
        linear-gradient(to right, #0d3d66, #2c82c0 3px, #174f7e 6px, #05080b 6px);
}
.grip {
    flex: none;
    width: 8px;
    border-right: 2px solid #111;
    border-left: 2px solid #1a1a1a;
    background-color: #484848;
}
.grip::before {
    content: "";
    display: block;
    border: 2px solid transparent;
    border-bottom: 4px solid #000;
}

/* menu bar */
.menubar {
    display: flex;
    align-items: center;
    height: 24px;
    background: linear-gradient(#333, #3e3e3e);
}
.menubar .grip {
    align-self: stretch;
}
.menus {
    display: flex;
    gap: 11px;
    margin-left: 6px;
}
.takes {
    display: flex;
    align-items: center;
    gap: 6px;
    margin-left: auto;
    line-height: 22px;
}
.takes input {
    appearance: none;
    width: 13px;
    height: 13px;
    background-color: #151515;
    border: 1px solid #262626;
}
.picker {
    display: flex;
    align-items: center;
    align-self: stretch;
    background: linear-gradient(#484848, #3c3c3c);
}
.picker select {
    appearance: none;
    flex: 1;
    outline: none;
}
.take-picker {
    width: 128px;
    height: 22px;
    margin-left: 13px;
    padding: 0 5px 0 12px;
    border-left: 1px solid #262626;
}
.help {
    width: 12px;
    height: 12px;
    margin: 0 10px 2px 10px;
    border-radius: 6px;
    background: radial-gradient(#6f9add, #3d68a8);
    box-shadow: 0 0 0 1px #8ea6c4;
    color: #fff;
    font-size: 9px;
    font-weight: bold;
}

/* shelves */
.shelves {
    display: flex;
    height: 54px;
    border-top: 1px solid #080808;
    border-bottom: 1px solid #080808;
}
.shelf {
    min-width: 0;
    display: flex;
    flex-direction: column;
}
.shelf-left {
    flex: 629;
}
.shelf-right {
    flex: 623;
}
.splitter {
    flex: none;
    width: 8px;
    border: 1px solid #0a0a0a;
    border-width: 0 2px 0 1px;
    background-color: #484848;
}
.tabs {
    display: flex;
    gap: 2px;
    height: 15px;
    padding-left: 1px;
    background-color: #1c1c1c;
    font-size: 10px;
}
.tab {
    padding: 0 8px;
    border-top: 1px solid #4c4c4c;
    background-color: #2b2b2b;
}
.tab.active {
    background-color: #484848;
}
.round {
    width: 15px;
    margin-left: 2px;
}
.round.push {
    margin-left: auto;
}
.tools {
    flex: 1;
    display: flex;
    gap: 8px;
    padding: 2px 0 0 5px;
    overflow: hidden;
    border-top: 1px solid #4e4e4e;
    background: linear-gradient(#464646, #343434);
    font-size: 8px;
}
.tools button {
    flex-direction: column;
    justify-content: flex-start;
    gap: 2px;
    min-width: 30px;
    line-height: 10px;
}
.tools svg {
    width: 20px;
    height: 20px;
}
.tools.wide {
    gap: 0;
    padding-left: 15px;
}
.tools.wide button {
    width: 57px;
}
.tools.wide .cut {
    width: 20px;
    min-width: 20px;
    padding-top: 22px;
}
.more {
    flex: none;
    margin: 11px 0 0 2px;
    width: 9px;
    height: 10px;
    background-color: #858585;
    clip-path: polygon(0 0, 100% 50%, 0 100%);
}

/* pane tabs and path */
.pane-tabs {
    display: flex;
    align-items: center;
    gap: 2px;
    height: 18px;
    padding-left: 1px;
    background-color: #2f2f2f;
    font-size: 10px;
}
.pane-tab {
    align-self: stretch;
    gap: 10px;
    padding: 0 4px 0 8px;
    background-color: #2a2a2a;
    border-right: 1px solid #1c1c1c;
}
.pane-tab.active {
    gap: 3px;
    background-color: #424242;
    font-style: italic;
}
.maximize {
    width: 13px;
    height: 12px;
    border: 2px solid #a27427;
    background-color: #ddd;
}
.pathbar {
    display: flex;
    align-items: center;
    gap: 7px;
    height: 26px;
    padding: 0 5px 2px 6px;
    background-color: #3d3d3d;
    border-bottom: 1px solid #0b0b0b;
}
.path {
    flex: 1;
    display: flex;
    align-items: center;
    gap: 6px;
    height: 22px;
    margin: 0 5px 0 2px;
    padding-left: 6px;
    border: 1px solid #080808;
    background: linear-gradient(#464646, #363636);
}
.path a {
    display: flex;
    align-items: center;
    gap: 4px;
    color: #d6d6d6;
    text-decoration: none;
}
.path-drop {
    width: 18px;
    height: 20px;
    margin-left: auto;
    background-color: #4b4b4b;
}
.path-drop::before {
    content: "";
    border: 3px solid transparent;
    border-top: 5px solid #777;
    margin-top: 3px;
}
.options {
    margin-left: 9px;
}

/* network toolbar */
.toolbar {
    display: flex;
    align-items: center;
    height: 27px;
    border-top: 1px solid #5a5a5a;
    border-bottom: 1px solid #080808;
    background-color: #2e2e2e;
}
.toolbar .grip {
    align-self: stretch;
}
.tool-group {
    display: flex;
    gap: 8px;
    margin-left: 7px;
    padding-bottom: 2px;
}
.tool-group + .tool-group {
    margin-left: 17px;
}
.tool-group + .tool-group.push {
    margin-left: auto;
}
.tool-group.last {
    margin-right: 9px;
}
.tool-group svg {
    width: 14px;
    height: 14px;
}

/* node canvas */
.network {
    position: relative;
    flex: 1;
    overflow: hidden;
    background-color: #2e2e2e;
}
.wires {
    position: absolute;
    top: 0;
    left: 0;
}
.wire path {
    fill: none;
    stroke: #808080;
}
.gold path {
    stroke: #806a3c;
}
.gold .arrow {
    fill: #8b7136;
}
.watermark {
    position: absolute;
    top: 5px;
    right: 7px;
    color: #3f3f3f;
    font-size: 15px;
    font-weight: bold;
}
.watermark.edition {
    top: auto;
    bottom: 5px;
    color: #3a3a3a;
    font-size: 16px;
}
.node {
    position: absolute;
    width: 60px;
}
.name {
    height: 15px;
    padding-left: 2px;
    line-height: 16px;
    white-space: nowrap;
}
.subnet .name {
    color: #a0a2dc;
}
.head {
    height: 11px;
    margin-bottom: 1px;
    padding-left: 51px;
    background-color: #bababa;
}
.head::before {
    content: "";
    display: block;
    width: 1px;
    height: 11px;
    background-color: #777;
}
.yellow .head {
    background-color: #dedb68;
}
.pale .head {
    background-color: #e1df90;
}
.cyan .head {
    background-color: #18aadd;
}
.selected .block {
    outline: 2px solid #e5a823;
    outline-offset: 1px;
}
.body {
    display: flex;
    flex-direction: column;
    background-color: #6a6670;
    font-size: 8px;
    line-height: 7px;
    color: #dadada;
}
.row {
    flex: 1;
    min-height: 0;
    display: flex;
    padding: 0;
}
.row span {
    padding: 0 3px;
    white-space: nowrap;
}
.row .out {
    margin-left: auto;
}
.port {
    width: 7px;
    border: 1px solid #3a3a3e;
    border-width: 0 0 1px 1px;
}
.port:first-child {
    border-width: 0 1px 1px 0;
}
.g { background-color: #80c080; }
.t { background-color: #7fab9b; }
.b { background-color: #7cb0d0; }
.p { background-color: #d8b698; }
.w { background-color: #f0f0f0; }

/* playbar */
.playbar {
    display: flex;
    align-items: center;
    height: 43px;
    border-top: 1px solid #6a6a6a;
    border-bottom: 1px solid #050505;
    background-color: #303030;
}
.playbar .grip {
    align-self: stretch;
}
.playbar button {
    border: 1px solid #222;
    border-top-color: #555;
    background: linear-gradient(#4c4c4c, #3a3a3a);
}
.transport, .frame-box, .play-options {
    margin-bottom: 2px;
}
.transport {
    display: flex;
    margin-left: 5px;
}
.transport button {
    width: 24px;
    height: 25px;
}
.playbar .on {
    background: #bf8420;
    border-color: #a06c16;
}
.frame-box {
    display: flex;
    margin-left: 9px;
}
.frame-box button {
    width: 17px;
    height: 19px;
}
.frame {
    width: 49px;
    height: 18px;
    padding-left: 2px;
    background-color: #141414;
    color: #e2e2e2;
}
.frame.start {
    width: 40px;
    margin-left: 9px;
    margin-bottom: 2px;
}
.frame.end {
    width: 41px;
    margin-left: 5px;
    margin-bottom: 2px;
}
.timeline {
    flex: 1;
    align-self: stretch;
    margin-left: 4px;
    border-right: 1px solid #777;
    background-color: #2a2a2a;
}
.ticks {
    position: relative;
    display: flex;
    align-items: center;
    height: 31px;
    background: linear-gradient(#a6a6a6, #a6a6a6) 0 15px / 100% 1px no-repeat;
}
.tick {
    position: relative;
    flex: 6;
    height: 7px;
    border-right: 1px solid #858585;
}
.tick.first {
    flex: 5;
}
.tick.major {
    height: 9px;
    border-right: 2px solid #a9a9a9;
}
.tick b {
    position: absolute;
    left: 100%;
    bottom: 7px;
    padding-left: 2px;
    font-size: 10px;
    line-height: 10px;
    font-weight: normal;
}
.playhead {
    position: absolute;
    z-index: 1;
    left: 0;
    top: 1px;
    width: 19px;
    height: 19px;
    border: 1px solid #eee;
    background-color: #080808;
    color: #fff;
    font-size: 12px;
    line-height: 18px;
    text-align: center;
}
.range {
    display: flex;
    justify-content: space-between;
    height: 8px;
    padding: 0 5px;
    border-bottom: 1px solid #000;
    background: linear-gradient(#565656, #3c3c3c);
    color: #111;
    font-size: 8px;
    line-height: 3px;
    font-weight: bold;
}
.play-options {
    display: flex;
    margin-left: 8px;
    margin-right: 5px;
}
.play-options button {
    width: 22px;
    height: 22px;
}
.play-options .apart {
    margin-right: 3px;
}

/* status bar */
.status {
    display: flex;
    align-items: center;
    justify-content: flex-end;
    height: 23px;
    padding-bottom: 1px;
    background-color: #191919;
}
.status button {
    width: 22px;
    height: 22px;
    background-color: #303030;
}
.update-picker {
    width: 117px;
    padding: 0 5px 0 12px;
}

/* title card over the window */
.title-card {
    position: absolute;
    left: 35%;
    right: 0;
    bottom: 78px;
    display: flex;
    align-items: center;
    height: 112px;
    padding-left: 28px;
    border: 2px solid #8e8e8e;
    border-radius: 10px;
    background-color: rgba(15, 15, 15, 0.97);
}
.logo {
    width: 55px;
    height: 65px;
    background-color: #e58538;
    box-shadow: 0 0 0 3px #000;
    color: #14100c;
    font: bold 58px/65px "DejaVu Serif Condensed", "Liberation Serif", serif;
    text-align: center;
}
.title-card h1 {
    margin: 0 0 0 25px;
    padding-bottom: 3px;
    color: #fff;
    font: 32px "Liberation Sans", Arial, sans-serif;
}
```
